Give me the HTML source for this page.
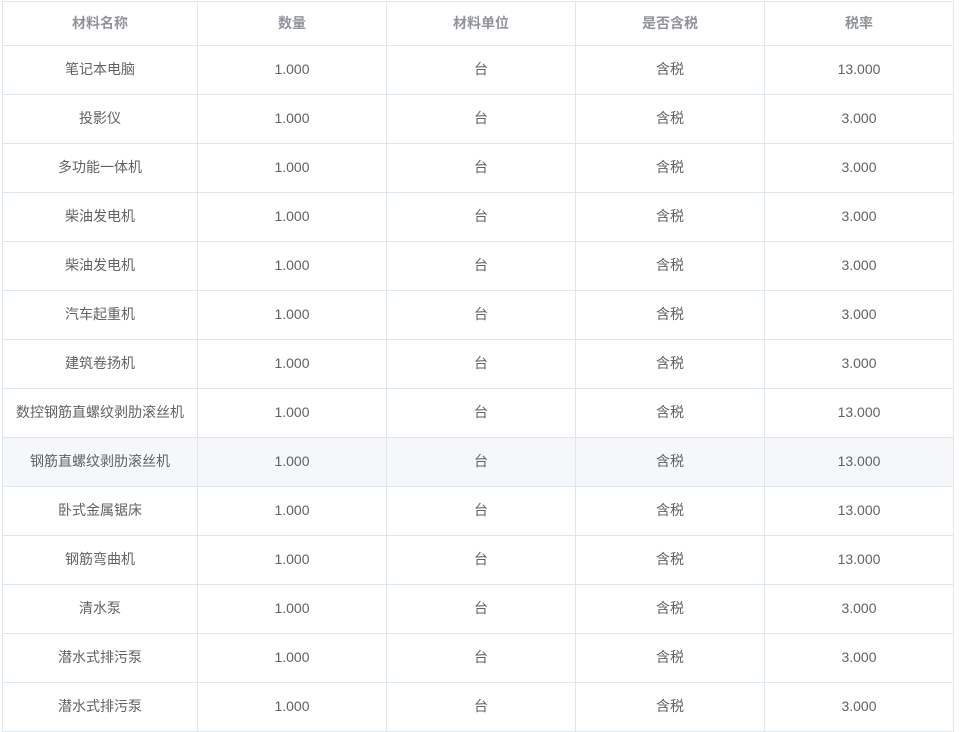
<!DOCTYPE html><html><head><meta charset="utf-8"><style>
body{margin:0;background:#fff;font-family:"Liberation Sans","Noto Sans CJK SC",sans-serif;}
table{position:absolute;left:2px;top:1px;border-collapse:collapse;table-layout:fixed;}
td,th{border:1px solid #dfe6ec;text-align:center;font-size:14px;color:#606266;padding:0 0 2px 0;}
th{height:41px;color:#909399;font-weight:bold;}
td{height:46px;}
tr.h td{background:#f5f7fa;}
</style></head><body>
<table>
<colgroup><col style="width:195px"><col style="width:189px"><col style="width:189px"><col style="width:189px"><col style="width:189px"></colgroup>
<tr><th>材料名称</th><th>数量</th><th>材料单位</th><th>是否含税</th><th>税率</th></tr>
<tr><td>笔记本电脑</td><td>1.000</td><td>台</td><td>含税</td><td>13.000</td></tr>
<tr><td>投影仪</td><td>1.000</td><td>台</td><td>含税</td><td>3.000</td></tr>
<tr><td>多功能一体机</td><td>1.000</td><td>台</td><td>含税</td><td>3.000</td></tr>
<tr><td>柴油发电机</td><td>1.000</td><td>台</td><td>含税</td><td>3.000</td></tr>
<tr><td>柴油发电机</td><td>1.000</td><td>台</td><td>含税</td><td>3.000</td></tr>
<tr><td>汽车起重机</td><td>1.000</td><td>台</td><td>含税</td><td>3.000</td></tr>
<tr><td>建筑卷扬机</td><td>1.000</td><td>台</td><td>含税</td><td>3.000</td></tr>
<tr><td>数控钢筋直螺纹剥肋滚丝机</td><td>1.000</td><td>台</td><td>含税</td><td>13.000</td></tr>
<tr class="h"><td>钢筋直螺纹剥肋滚丝机</td><td>1.000</td><td>台</td><td>含税</td><td>13.000</td></tr>
<tr><td>卧式金属锯床</td><td>1.000</td><td>台</td><td>含税</td><td>13.000</td></tr>
<tr><td>钢筋弯曲机</td><td>1.000</td><td>台</td><td>含税</td><td>13.000</td></tr>
<tr><td>清水泵</td><td>1.000</td><td>台</td><td>含税</td><td>3.000</td></tr>
<tr><td>潜水式排污泵</td><td>1.000</td><td>台</td><td>含税</td><td>3.000</td></tr>
<tr><td>潜水式排污泵</td><td>1.000</td><td>台</td><td>含税</td><td>3.000</td></tr>
</table>
</body></html>
